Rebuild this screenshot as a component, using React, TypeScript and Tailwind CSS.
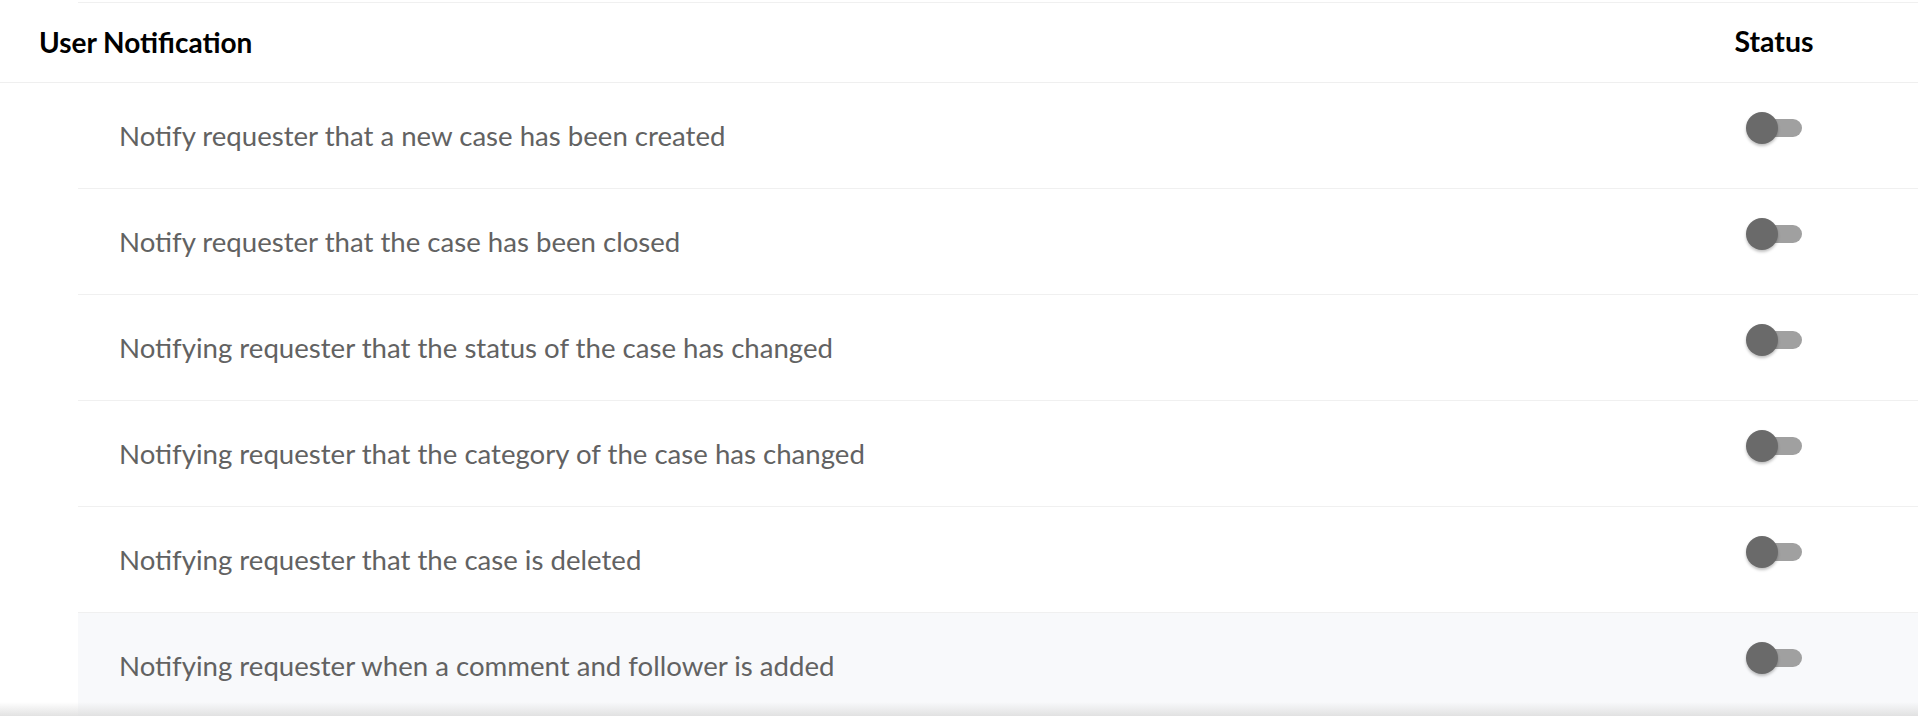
import { useState } from 'react';

const items = [
  'Notify requester that a new case has been created',
  'Notify requester that the case has been closed',
  'Notifying requester that the status of the case has changed',
  'Notifying requester that the category of the case has changed',
  'Notifying requester that the case is deleted',
  'Notifying requester when a comment and follower is added',
];

const Toggle = ({ on, onClick }: { on: boolean; onClick: () => void }) => (
  <button onClick={onClick} className="relative w-[56px] h-[32px] -mt-4">
    <span className="absolute left-2 right-0 top-[7px] h-[18px] rounded-full bg-[#a0a0a0]" />
    <span
      className={`absolute top-0 w-8 h-8 rounded-full bg-[#6a6a6a] shadow-[0_2px_3px_rgba(0,0,0,0.25)] ${on ? 'left-6' : 'left-0'}`}
    />
  </button>
);

export default function App() {
  const [status, setStatus] = useState(items.map(() => false));

  return (
    <div className="relative w-full h-[718px] overflow-hidden bg-white font-['Lato','Open_Sans',sans-serif]">
      <div className="ml-[78px] h-[3px] border-b border-[#f0f0f0]" />

      {/* Header */}
      <div className="flex items-center h-[80px] pb-[2px] border-b border-[#efefef]">
        <div className="flex-1 pl-[39px] text-[28px] font-bold text-black">User Notification</div>
        <div className="w-[160px] mr-[64px] text-center text-[28.5px] font-bold text-black">Status</div>
      </div>

      {/* Rows */}
      <div className="ml-[78px]">
        {items.map((label, i) => (
          <div
            key={label}
            className={`flex items-center h-[106px] border-b border-[#f0f0f0] ${i === items.length - 1 ? 'bg-[#f8f9fb]' : ''}`}
          >
            <div className="flex-1 pl-[41px] text-[27.6px] text-[#626262]">{label}</div>
            <div className="w-[160px] mr-[64px] flex justify-center">
              <Toggle
                on={status[i]}
                onClick={() => setStatus((s) => s.map((v, j) => (j === i ? !v : v)))}
              />
            </div>
          </div>
        ))}
      </div>

      {/* bottom bar shadow */}
      <div className="absolute left-0 right-0 bottom-0 h-[16px] bg-gradient-to-b from-transparent to-[#dedede]" />
      <div className="absolute left-0 right-0 bottom-0 h-[2px] bg-white" />
    </div>
  );
}
